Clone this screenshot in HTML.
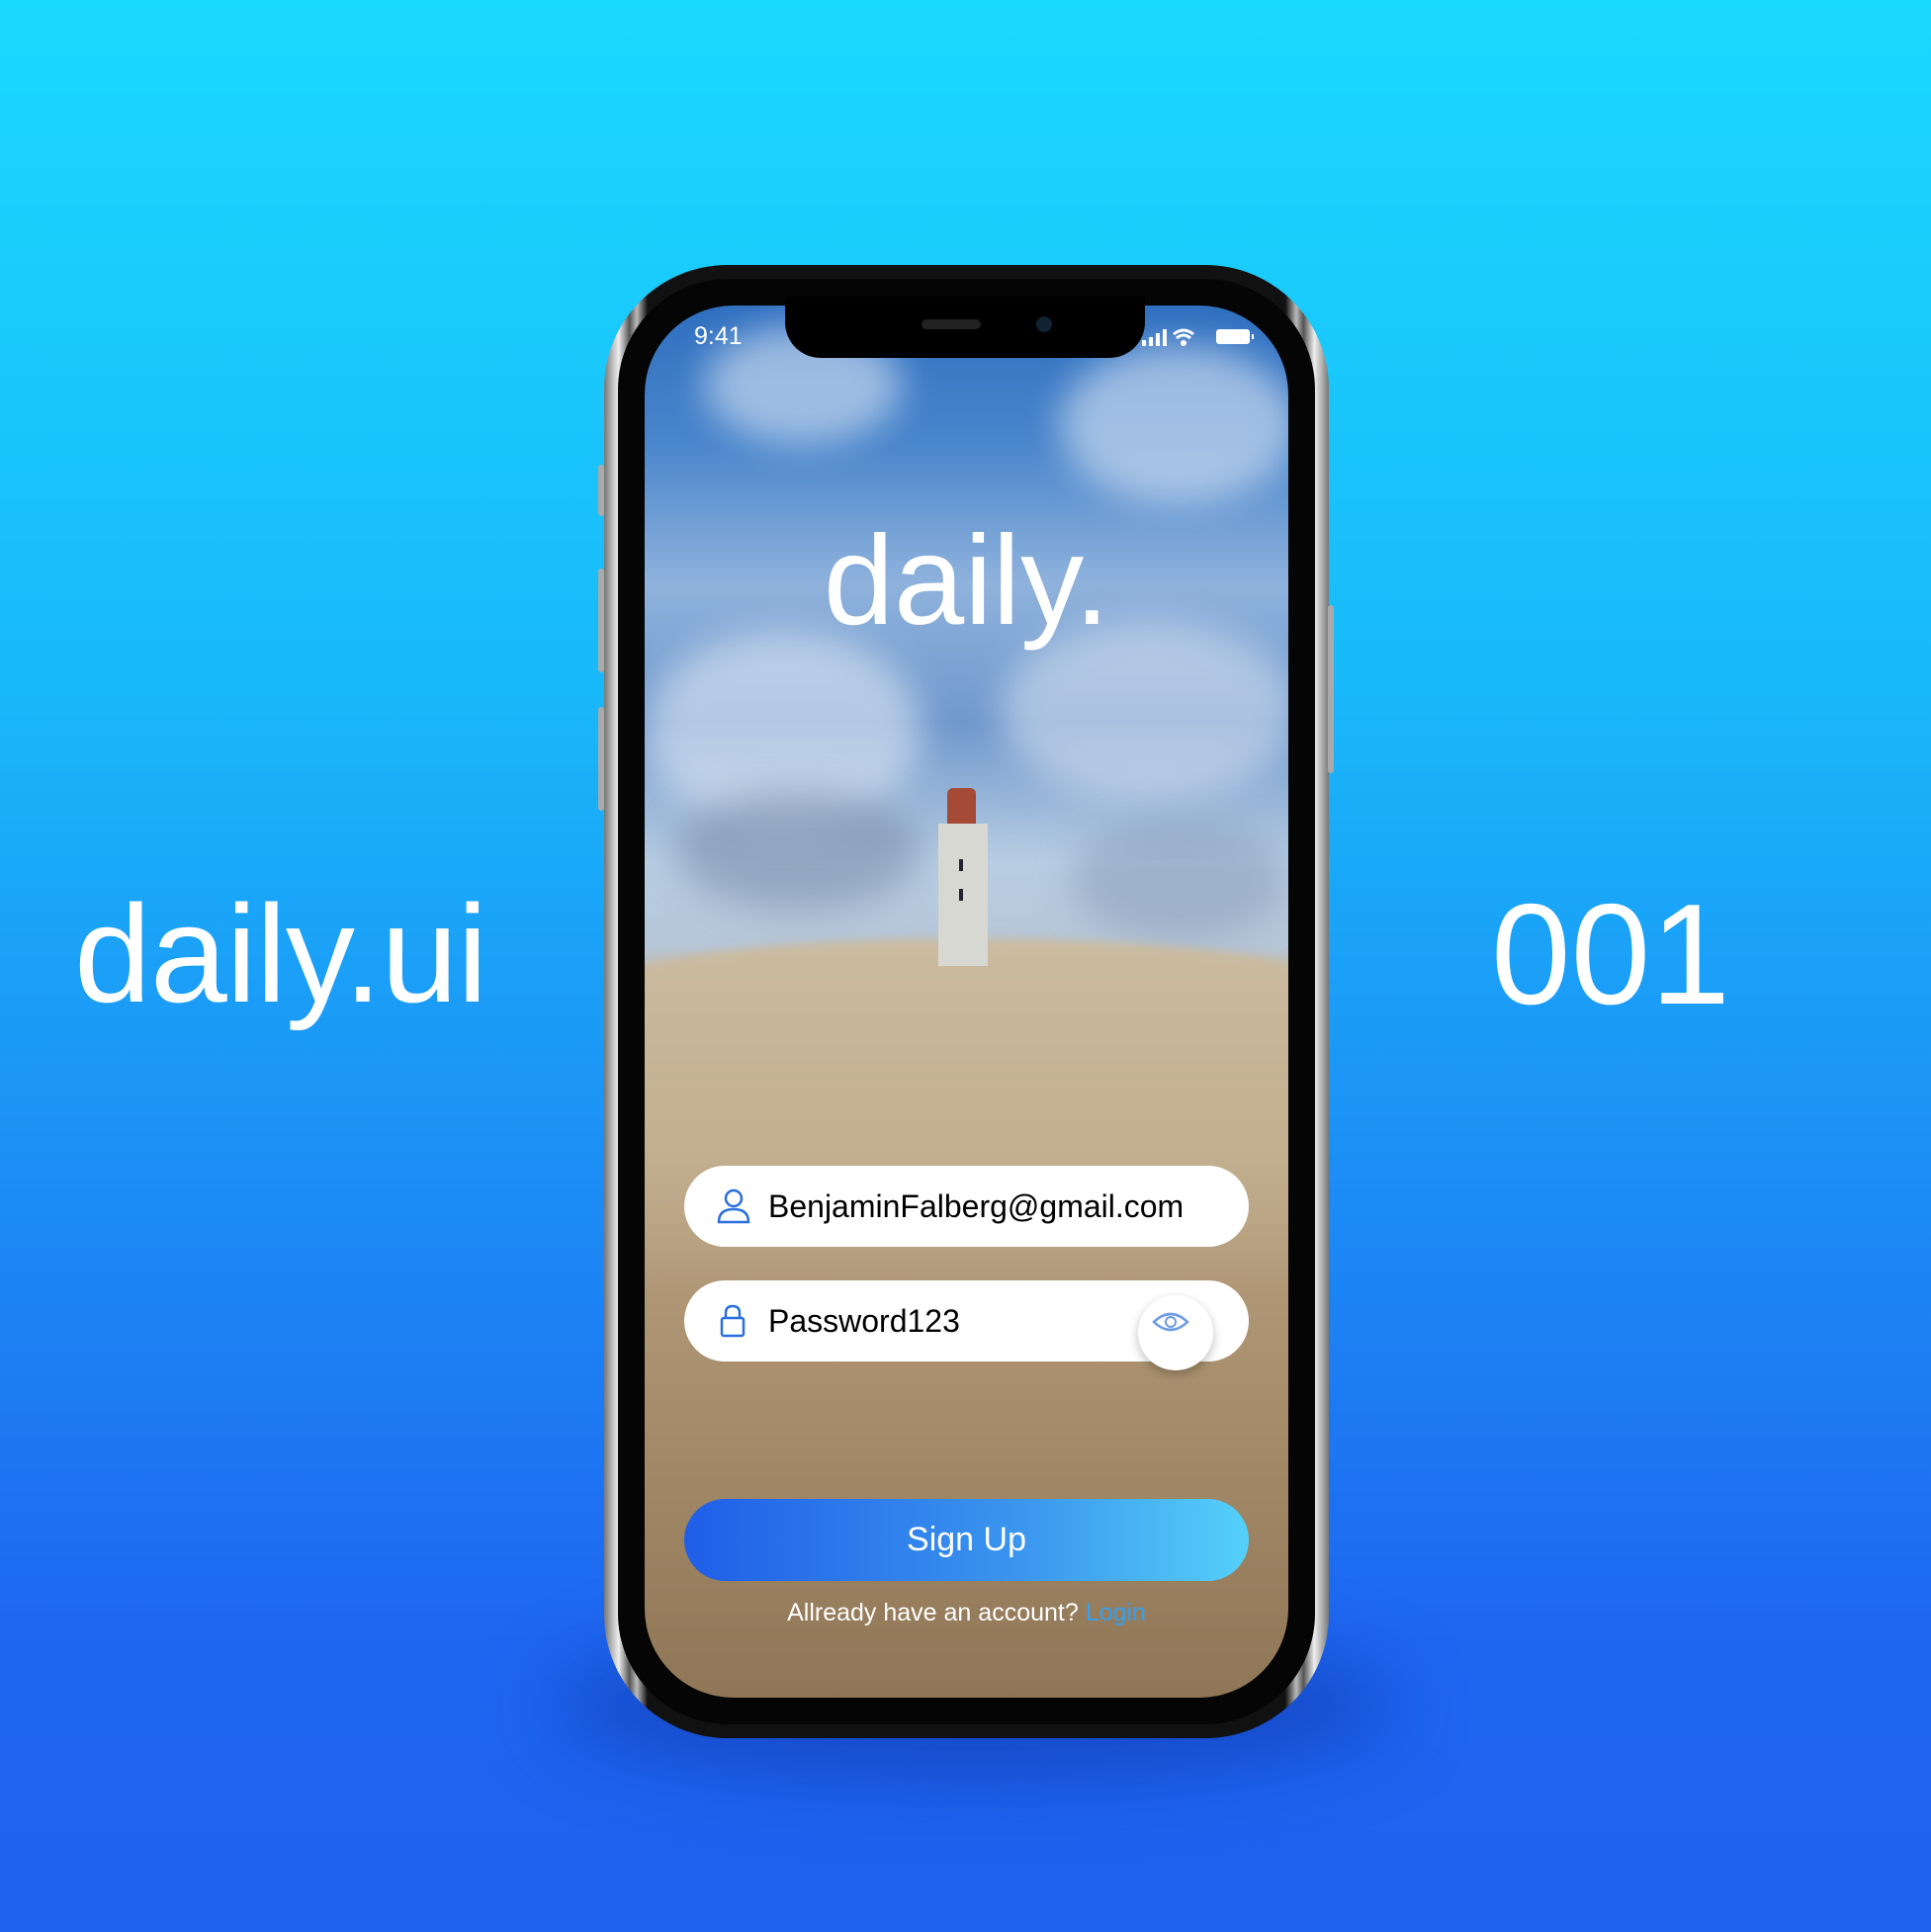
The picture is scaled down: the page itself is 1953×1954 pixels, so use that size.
<!DOCTYPE html>
<html><head><meta charset="utf-8"><style>
*{margin:0;padding:0;box-sizing:border-box}
body{width:1953px;height:1954px;overflow:hidden;position:relative;font-family:"Liberation Sans",sans-serif;background:linear-gradient(180deg,#1ad9fe 0%,#19b9fa 35%,#1c8ff5 60%,#1e66f0 85%,#1e62ef 100%)}
.big{position:absolute;color:#fff;font-size:140px;line-height:1}
.shadow{position:absolute;left:560px;top:1650px;width:850px;height:150px;border-radius:50%;background:rgba(10,40,150,.45);filter:blur(40px)}
.phone{position:absolute;left:611px;top:268px;width:733px;height:1490px;border-radius:125px;background:linear-gradient(90deg,#777,#eee 2%,#555 3.5%,#bbb 4.5%,#111 6%,#111 94%,#bbb 95.5%,#555 96.5%,#eee 98%,#777);}
.inner{position:absolute;left:14px;top:14px;right:14px;bottom:14px;border-radius:112px;background:#050505}
.screen{position:absolute;left:652px;top:309px;width:651px;height:1408px;border-radius:90px;overflow:hidden;
background:linear-gradient(180deg,#2f6fc0 0%,#4a86cc 10%,#8fb2dc 20%,#6f98cc 30%,#b8cde3 40%,#b6c6d8 46%,#c9b89a 49%,#c4b293 56%,#b49d7c 66%,#a88e6c 78%,#8f7656 100%)}
.cloud{position:absolute;border-radius:50%;background:rgba(235,240,248,.55);filter:blur(18px)}
.notch{position:absolute;left:794px;top:300px;width:364px;height:62px;background:#000;border-radius:0 0 36px 36px}
.field{position:absolute;left:692px;width:571px;height:82px;border-radius:41px;background:#fff;font-size:32px;color:#000;line-height:82px;padding-left:85px}
</style></head><body>
<div class="big" style="left:75px;top:895px;letter-spacing:-1px">daily.ui</div>
<div class="big" style="left:1508px;top:893px;font-size:145px">001</div>
<div class="shadow"></div>
<div class="phone"><div class="inner"></div></div>
<div style="position:absolute;left:605px;top:470px;width:6px;height:52px;background:#aaa;border-radius:3px"></div>
<div style="position:absolute;left:605px;top:575px;width:6px;height:105px;background:#aaa;border-radius:3px"></div>
<div style="position:absolute;left:605px;top:715px;width:6px;height:105px;background:#aaa;border-radius:3px"></div>
<div style="position:absolute;left:1343px;top:612px;width:6px;height:170px;background:#aaa;border-radius:3px"></div>
<div class="screen">
 <div class="cloud" style="left:60px;top:20px;width:200px;height:120px"></div>
 <div class="cloud" style="left:420px;top:40px;width:240px;height:160px"></div>
 <div class="cloud" style="left:0px;top:330px;width:280px;height:200px"></div>
 <div class="cloud" style="left:360px;top:320px;width:300px;height:180px;background:rgba(230,236,245,.5)"></div>
 <div class="cloud" style="left:30px;top:490px;width:250px;height:120px;background:rgba(110,130,160,.5)"></div>
 <div class="cloud" style="left:430px;top:520px;width:220px;height:120px;background:rgba(120,140,170,.4)"></div>
 <div style="position:absolute;left:-40px;top:640px;width:740px;height:360px;background:linear-gradient(180deg,#cbbb9f,#c4b293 40%,rgba(190,170,140,0));border-radius:50% 50% 0 0/50px 50px 0 0;filter:blur(5px)"></div>
 <div style="position:absolute;left:306px;top:488px;width:29px;height:36px;background:#a54a36;border-radius:6px 6px 0 0"></div>
 <div style="position:absolute;left:297px;top:524px;width:50px;height:144px;background:#d8d8d2"></div>
 <div style="position:absolute;left:318px;top:560px;width:4px;height:12px;background:#223"></div>
 <div style="position:absolute;left:318px;top:590px;width:4px;height:12px;background:#223"></div>
 <div style="position:absolute;left:0;top:0;width:651px;text-align:center;top:215px;font-size:128px;color:#fff;line-height:1">daily.</div>
</div>
<div class="notch"></div>
<div style="position:absolute;left:932px;top:323px;width:60px;height:10px;border-radius:5px;background:#222"></div>
<div style="position:absolute;left:1048px;top:320px;width:16px;height:16px;border-radius:50%;background:#123"></div>
<div style="position:absolute;left:702px;top:326px;color:#fff;font-size:25px">9:41</div>
<svg style="position:absolute;left:1155px;top:330px" width="115" height="22" viewBox="0 0 115 22">
<rect x="0" y="14" width="4" height="6" fill="#fff"/><rect x="7" y="11" width="4" height="9" fill="#fff"/><rect x="14" y="7" width="4" height="13" fill="#fff"/><rect x="21" y="3" width="4" height="17" fill="#fff"/>
<path d="M32 8 Q42 0 52 8 M35 12 Q42 6 49 12" stroke="#fff" stroke-width="3" fill="none"/><circle cx="42" cy="17" r="3" fill="#fff"/>
<rect x="75" y="3" width="34" height="15" rx="3" fill="#fff"/><rect x="111" y="8" width="2" height="5" fill="#fff"/></svg>
<div class="field" style="top:1179px">BenjaminFalberg@gmail.com
<svg style="position:absolute;left:32px;top:22px" width="36" height="38" viewBox="0 0 36 38"><circle cx="18" cy="11" r="8" stroke="#2a6fe0" stroke-width="2.5" fill="none"/><path d="M3 35 Q3 22 18 22 Q33 22 33 35 Z" stroke="#2a6fe0" stroke-width="2.5" fill="none"/></svg></div>
<div class="field" style="top:1295px">Password123
<svg style="position:absolute;left:36px;top:24px" width="26" height="34" viewBox="0 0 26 34"><rect x="2" y="14" width="22" height="18" rx="2" stroke="#2a6fe0" stroke-width="2.5" fill="none"/><path d="M6 14 V9 Q6 2 13 2 Q20 2 20 9 V14" stroke="#2a6fe0" stroke-width="2.5" fill="none"/></svg>
<div style="position:absolute;left:459px;top:15px;width:76px;height:76px;border-radius:50%;background:#fff;box-shadow:0 4px 10px rgba(0,0,0,.25)"></div>
<svg style="position:absolute;left:472px;top:30px" width="40" height="24" viewBox="0 0 40 24"><path d="M3 12 Q20 -4 37 12 Q20 28 3 12 Z" stroke="#6f9be6" stroke-width="2.5" fill="none"/><circle cx="20" cy="12" r="5" stroke="#6f9be6" stroke-width="2" fill="none"/></svg></div>
<div style="position:absolute;left:692px;top:1516px;width:571px;height:83px;border-radius:42px;background:linear-gradient(90deg,#1f5ee8,#3b96ee 60%,#55d0fa);color:#fff;font-size:34px;text-align:center;line-height:83px">Sign Up</div>
<div style="position:absolute;left:692px;top:1617px;width:571px;text-align:center;color:#fff;font-size:25px">Allready have an account? <span style="color:#34a0ee">Login</span></div>
</body></html>
